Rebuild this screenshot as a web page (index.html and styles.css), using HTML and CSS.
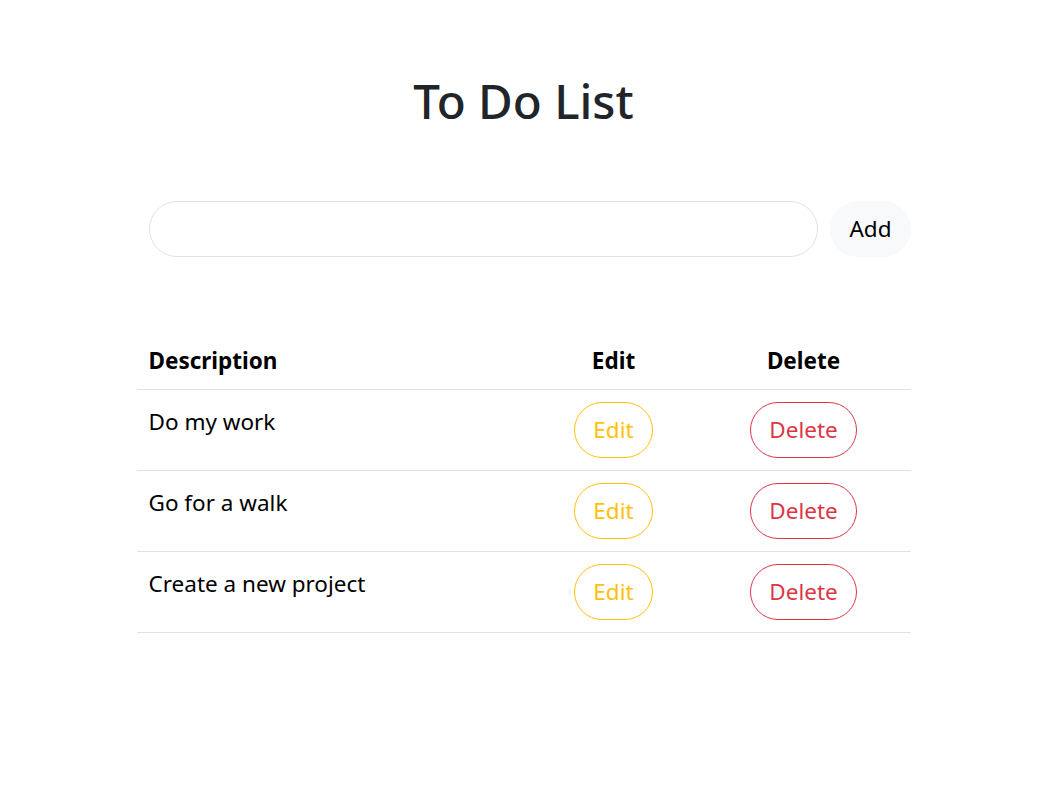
FILE: index.html
```html
<!DOCTYPE html>
<html lang="en">
<head>
<meta charset="utf-8">
<title>To Do List</title>
<link rel="stylesheet" href="styles.css">
</head>
<body>
<main class="container">
  <h1 class="title">To Do List</h1>
  <form class="add-form">
    <input class="task-input" type="text" aria-label="New task">
    <button class="btn btn-light" type="button">Add</button>
  </form>
  <table class="todo-table">
    <colgroup>
      <col class="col-desc">
      <col class="col-edit">
      <col class="col-delete">
    </colgroup>
    <thead>
      <tr>
        <th class="th-desc">Description</th>
        <th>Edit</th>
        <th>Delete</th>
      </tr>
    </thead>
    <tbody>
      <tr>
        <td class="td-desc">Do my work</td>
        <td class="td-action"><button class="btn btn-edit" type="button">Edit</button></td>
        <td class="td-action"><button class="btn btn-delete" type="button">Delete</button></td>
      </tr>
      <tr>
        <td class="td-desc">Go for a walk</td>
        <td class="td-action"><button class="btn btn-edit" type="button">Edit</button></td>
        <td class="td-action"><button class="btn btn-delete" type="button">Delete</button></td>
      </tr>
      <tr>
        <td class="td-desc">Create a new project</td>
        <td class="td-action"><button class="btn btn-edit" type="button">Edit</button></td>
        <td class="td-action"><button class="btn btn-delete" type="button">Delete</button></td>
      </tr>
    </tbody>
  </table>
</main>
</body>
</html>
```

FILE: styles.css
```css
* { box-sizing: border-box; }

body {
  margin: 0;
  background: #fff;
  color: #000;
  font-family: "Noto Sans", "Open Sans", sans-serif;
  font-size: 22.5px;
  line-height: 1.5;
}

.container {
  width: 774px;
  margin: 0 auto;
}

.title {
  margin: 0;
  padding-top: 72px;
  text-align: center;
  font-size: 47.5px;
  font-weight: 500;
  line-height: 1.2;
  color: #212529;
}

.add-form {
  display: flex;
  gap: 12px;
  margin-top: 72px;
  padding-left: 12px;
}

.task-input {
  flex: 1;
  height: 56px;
  border: 1px solid #dee2e6;
  border-radius: 28px;
  padding: 0 20px;
  font: inherit;
  outline: none;
}

.btn {
  font: inherit;
  line-height: 1.5;
  border-radius: 999px;
  height: 56px;
  padding: 0 18px;
  cursor: pointer;
  background: transparent;
  border: 1px solid transparent;
}

.btn-light {
  background: #f8f9fa;
  border-color: #f8f9fa;
  color: #000;
}

.todo-table {
  width: 100%;
  margin-top: 77px;
  border-collapse: collapse;
}

.col-desc { width: 394px; }
.col-edit { width: 166px; }
.col-delete { width: 214px; }

.todo-table th {
  font-weight: 700;
  text-align: center;
  padding: 10px 12px 11px;
  border-bottom: 1px solid #dee2e6;
}

.todo-table th.th-desc { text-align: left; }

.todo-table td {
  padding: 12px;
  border-bottom: 1px solid #dee2e6;
  vertical-align: top;
}

.todo-table td.td-desc { padding-top: 15px; }

.td-action { text-align: center; }

.btn-edit {
  color: #ffc107;
  border-color: #ffc107;
}

.btn-delete {
  color: #dc3545;
  border-color: #dc3545;
}
```
